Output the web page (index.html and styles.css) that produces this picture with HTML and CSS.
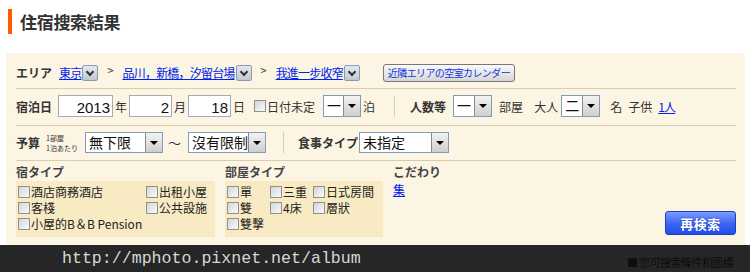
FILE: index.html
```html
<!DOCTYPE html>
<html lang="ja">
<head>
	<meta charset="UTF-8">
	<title>住宿搜索結果</title>
	<link rel="stylesheet" href="styles.css">
</head>
<body>
	<h1 class="title">住宿搜索結果</h1>

	<div class="panel">
		<div class="row row-area">
			<span class="label">エリア</span>
			<a class="link ml7" href="#">東京</a><span class="mini-sel"></span>
			<span class="crumb">&gt;</span>
			<a class="link" href="#">品川，新橋，汐留台場</a><span class="mini-sel"></span>
			<span class="crumb">&gt;</span>
			<a class="link" href="#">我進一步收窄</a><span class="mini-sel"></span>
			<button class="cal-btn">近隣エリアの空室カレンダー</button>
		</div>

		<div class="row row-date">
			<span class="label">宿泊日</span>
			<input class="num ml6 w55" value="2013">
			<span class="unit">年</span>
			<input class="num w43" value="2">
			<span class="unit">月</span>
			<input class="num w43" value="18">
			<span class="unit">日</span>
			<span class="check ml7"></span><span class="txt">日付未定</span>
			<span class="sel ml8 w38"><span class="sel-val">一</span><span class="sel-btn"></span></span>
			<span class="unit">泊</span>
			<span class="vdiv"></span>
			<span class="label">人数等</span>
			<span class="sel ml7 w39"><span class="sel-val">一</span><span class="sel-btn"></span></span>
			<span class="txt ml7">部屋</span>
			<span class="txt ml11">大人</span>
			<span class="sel ml3 w39"><span class="sel-val">二</span><span class="sel-btn"></span></span>
			<span class="txt ml10">名</span>
			<span class="txt ml6">子供</span>
			<a class="link ml6" href="#">1人</a>
		</div>

		<div class="row row-budget">
			<span class="label">予算</span>
			<span class="per"><span class="per-line">1部屋</span><span class="per-line">1泊あたり</span></span>
			<span class="sel big w78"><span class="sel-val">無下限</span><span class="sel-btn"></span></span>
			<span class="tilde">～</span>
			<span class="sel big w78"><span class="sel-val">沒有限制</span><span class="sel-btn"></span></span>
			<span class="vdiv d2"></span>
			<span class="label">食事タイプ</span>
			<span class="sel big ml1 w90"><span class="sel-val">未指定</span><span class="sel-btn"></span></span>
		</div>

		<div class="types">
			<div class="group g1">
				<div class="head">宿タイプ</div>
				<div class="box box1">
					<label class="opt"><span class="check"></span>酒店商務酒店</label>
					<label class="opt"><span class="check"></span>出租小屋</label>
					<label class="opt"><span class="check"></span>客棧</label>
					<label class="opt"><span class="check"></span>公共設施</label>
					<label class="opt wide"><span class="check"></span>小屋的B＆B Pension</label>
				</div>
			</div>
			<div class="group g2">
				<div class="head">部屋タイプ</div>
				<div class="box box2">
					<label class="opt"><span class="check"></span>單</label>
					<label class="opt"><span class="check"></span>三重</label>
					<label class="opt"><span class="check"></span>日式房間</label>
					<label class="opt"><span class="check"></span>雙</label>
					<label class="opt"><span class="check"></span>4床</label>
					<label class="opt"><span class="check"></span>層狀</label>
					<label class="opt"><span class="check"></span>雙擊</label>
				</div>
			</div>
			<div class="group g3">
				<div class="head">こだわり</div>
				<a class="link" href="#">集</a>
			</div>
			<div class="submit">
				<button class="search-btn">再検索</button>
			</div>
		</div>
	</div>

	<div class="footer">
		<span class="note">■ 您可搜索條件和圖標</span>
		<span class="mark">http://mphoto.pixnet.net/album</span>
	</div>
</body>
</html>
```

FILE: styles.css
```css
body {
	margin: 0;
	background: #fff;
	font-family: "Noto Sans CJK JP", "Liberation Sans", sans-serif;
	font-size: 12px;
	color: #333;
}

.title {
	margin: 9px 0 0 8px;
	height: 25px;
	padding-left: 8px;
	border-left: 4px solid #ff5a00;
	font-size: 17px;
	line-height: 25px;
	font-weight: bold;
	color: #333;
	letter-spacing: -0.3px;
}

.panel {
	margin: 19px 5px 0 6px;
	padding: 0 9px 0 10px;
	height: 192px;
	background: #fcf5e3;
}

.row {
	display: flex;
	align-items: center;
	border-bottom: 1px solid #d9ccb1;
}

.row-area {
	height: 31px;
	padding-top: 4px;
}

.row-date {
	height: 22px;
	padding: 6px 0 8px;
}

.row-budget {
	height: 21px;
	padding: 6px 0 7px;
}

.label {
	font-weight: bold;
	color: #333;
	flex: none;
}

.txt, .unit {
	color: #333;
	flex: none;
}

.unit {
	margin: 0 2px;
}

.link {
	color: #0022ee;
	text-decoration: underline;
	letter-spacing: -0.8px;
}

.ml1 { margin-left: 1px; }
.ml3 { margin-left: 3px; }
.ml6 { margin-left: 6px; }
.ml7 { margin-left: 7px; }
.ml8 { margin-left: 8px; }
.ml10 { margin-left: 10px; }
.ml11 { margin-left: 11px; }

.mini-sel {
	width: 14px;
	height: 14px;
	margin-left: 1px;
	border: 1px solid #8a9bb8;
	border-radius: 2px;
	background: linear-gradient(#e6e8ee, #c3c7d0);
	position: relative;
}

.mini-sel::after {
	content: "";
	position: absolute;
	left: 4px;
	top: 3px;
	width: 4px;
	height: 4px;
	border-right: 2px solid #333;
	border-bottom: 2px solid #333;
	transform: rotate(45deg);
}

.crumb {
	margin: 0 9px 0 9px;
	font-size: 11px;
	color: #333;
	position: relative;
	top: -3px;
}

.cal-btn {
	margin-left: 23px;
	height: 18px;
	padding: 0 4px;
	border: 1px solid #777;
	border-radius: 3px;
	background: linear-gradient(#fafafa, #d6d6d6);
	color: #1133dd;
	font-family: "Noto Sans CJK JP", sans-serif;
	font-size: 10px;
	letter-spacing: -0.6px;
	line-height: 14px;
}

.num {
	box-sizing: border-box;
	height: 22px;
	padding: 2px 2px 0 0;
	border: 1px solid #a5acb2;
	text-align: right;
	font-family: "Liberation Sans", sans-serif;
	font-size: 15px;
	color: #111;
	background: #fff;
	flex: none;
}

.w55 { width: 55px; }
.w43 { width: 43px; }
.w38 { width: 38px; }
.w39 { width: 39px; }
.w78 { width: 78px; }
.w90 { width: 90px; }

.check {
	box-sizing: border-box;
	display: inline-block;
	width: 12px;
	height: 12px;
	border: 1px solid #8e8f8f;
	background: linear-gradient(135deg, #d2d4d6, #fbfbfb);
	margin-right: 1px;
	flex: none;
}

.sel {
	box-sizing: border-box;
	display: flex;
	height: 22px;
	border: 1px solid #7f9db9;
	background: #fff;
	flex: none;
}

.sel.big {
	height: 21px;
}

.sel-val {
	flex: 1;
	padding-left: 3px;
	font-size: 14px;
	line-height: 19px;
	color: #111;
}

.sel-btn {
	width: 16px;
	border-left: 1px solid #8a8a8a;
	background: linear-gradient(#f2f2f2, #cfcfcf);
	position: relative;
}

.sel-btn::after {
	content: "";
	position: absolute;
	left: 4px;
	top: 8px;
	border-left: 4px solid transparent;
	border-right: 4px solid transparent;
	border-top: 4px solid #000;
}

.vdiv {
	width: 1px;
	height: 21px;
	background: #d9ccb1;
	margin: 0 15px 0 17px;
	flex: none;
}

.vdiv.d2 {
	margin: 0 14px 0 17px;
}

.per {
	display: flex;
	flex-direction: column;
	width: 36px;
	margin: 0 3px 0 6px;
	flex: none;
}

.per-line {
	height: 10px;
	font-size: 7px;
	line-height: 10px;
	color: #333;
	white-space: nowrap;
}

.tilde {
	margin: 0 7px 0 5px;
	font-size: 13px;
}

.types {
	display: flex;
	padding-top: 5px;
}

.head {
	height: 15px;
	font-weight: bold;
	color: #444;
	line-height: 12px;
}

.box {
	display: grid;
	align-content: start;
	row-gap: 3px;
	height: 52px;
	padding: 4px 0 0 2px;
	background: #f8ebc4;
}

.box1 {
	width: 197px;
	grid-template-columns: 128px 69px;
}

.box2 {
	width: 156px;
	grid-template-columns: 43px 43px 70px;
}

.opt {
	display: flex;
	align-items: center;
	height: 13px;
	font-size: 12px;
	line-height: 13px;
	color: #222;
	white-space: nowrap;
}

.opt.wide {
	grid-column: span 2;
}

.g2 {
	margin-left: 10px;
}

.g3 {
	margin-left: 10px;
}

.g3 .link {
	letter-spacing: 0;
}

.submit {
	flex: 1;
	display: flex;
	justify-content: flex-end;
	align-items: flex-end;
	height: 69px;
}

.search-btn {
	width: 71px;
	height: 24px;
	border: 1px solid #1b3fc4;
	border-radius: 3px;
	background: linear-gradient(#7f9bff, #3a63f0 55%, #2250e8);
	color: #fff;
	font-family: "Noto Sans CJK JP", sans-serif;
	font-size: 13px;
	font-weight: bold;
	letter-spacing: 0.5px;
	text-shadow: 0 0 2px #1b3fc4;
}

.footer {
	position: relative;
	height: 27px;
	background: #262626;
}

.note {
	position: absolute;
	left: 627px;
	top: 11px;
	font-size: 11px;
	line-height: 13px;
	letter-spacing: -0.6px;
	white-space: nowrap;
	color: #0d0d0d;
}

.mark {
	position: absolute;
	left: 62px;
	top: 4px;
	font-family: "Liberation Mono", monospace;
	font-size: 16.6px;
	color: #d6d6d6;
}
```
